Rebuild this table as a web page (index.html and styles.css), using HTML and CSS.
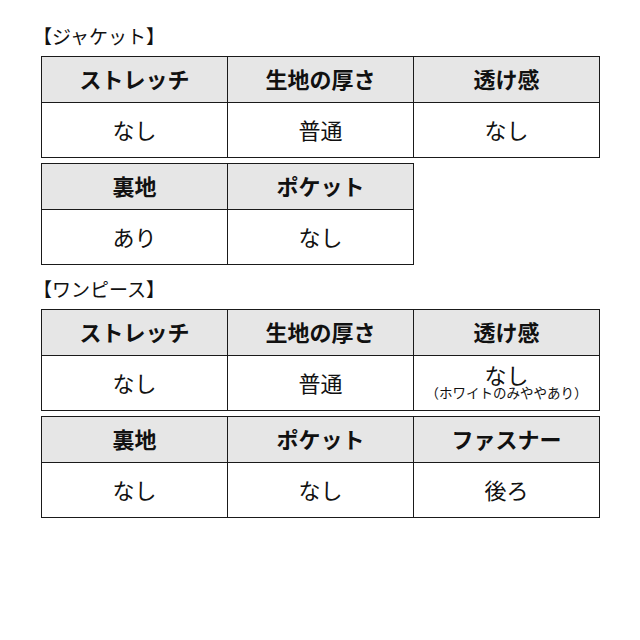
FILE: index.html
```html
<!DOCTYPE html>
<html lang="ja">
<head>
<meta charset="utf-8">
<link rel="stylesheet" href="styles.css">
</head>
<body>
<div class="page">
  <section class="section">
    <h2 class="title">【ジャケット】</h2>
    <table class="spec three">
      <tr class="head"><th>ストレッチ</th><th>生地の厚さ</th><th>透け感</th></tr>
      <tr class="body"><td>なし</td><td>普通</td><td>なし</td></tr>
    </table>
    <table class="spec two">
      <tr class="head"><th>裏地</th><th>ポケット</th></tr>
      <tr class="body"><td>あり</td><td>なし</td></tr>
    </table>
  </section>
  <section class="section">
    <h2 class="title">【ワンピース】</h2>
    <table class="spec three">
      <tr class="head"><th>ストレッチ</th><th>生地の厚さ</th><th>透け感</th></tr>
      <tr class="body"><td>なし</td><td>普通</td><td class="stack"><span class="main">なし</span><span class="note">（ホワイトのみややあり）</span></td></tr>
    </table>
    <table class="spec three">
      <tr class="head"><th>裏地</th><th>ポケット</th><th>ファスナー</th></tr>
      <tr class="body"><td>なし</td><td>なし</td><td>後ろ</td></tr>
    </table>
  </section>
</div>
</body>
</html>
```
FILE: styles.css
```css
html, body {
  margin: 0;
  padding: 0;
  background: #ffffff;
}
body {
  font-family: "Noto Sans CJK JP", "Noto Sans", sans-serif;
  color: #111;
}
.page {
  padding: 22px 0 0 41px;
}
.section + .section {
  margin-top: 10px;
}
.title {
  margin: 0 0 6px -8px;
  font-size: 19px;
  font-weight: normal;
  line-height: 28px;
  height: 28px;
}
.spec {
  border-collapse: collapse;
  table-layout: fixed;
  margin-bottom: 5px;
}
.spec:last-child {
  margin-bottom: 0;
}
.spec.three { width: 559px; }
.spec.two { width: 373px; }
.spec th, .spec td {
  border: 1px solid #1a1a1a;
  text-align: center;
  padding: 0 0 3px;
  font-size: 22px;
  line-height: 26px;
}
.spec th {
  background: #e6e6e6;
  font-weight: bold;
  height: 42px;
}
.spec td {
  height: 51px;
  font-weight: normal;
}
.spec td.stack {
  vertical-align: top;
  padding: 7px 0 0;
  height: 47px;
}
.main {
  display: block;
  line-height: 22px;
}
.note {
  display: block;
  font-size: 13.5px;
  line-height: 14px;
}
```
